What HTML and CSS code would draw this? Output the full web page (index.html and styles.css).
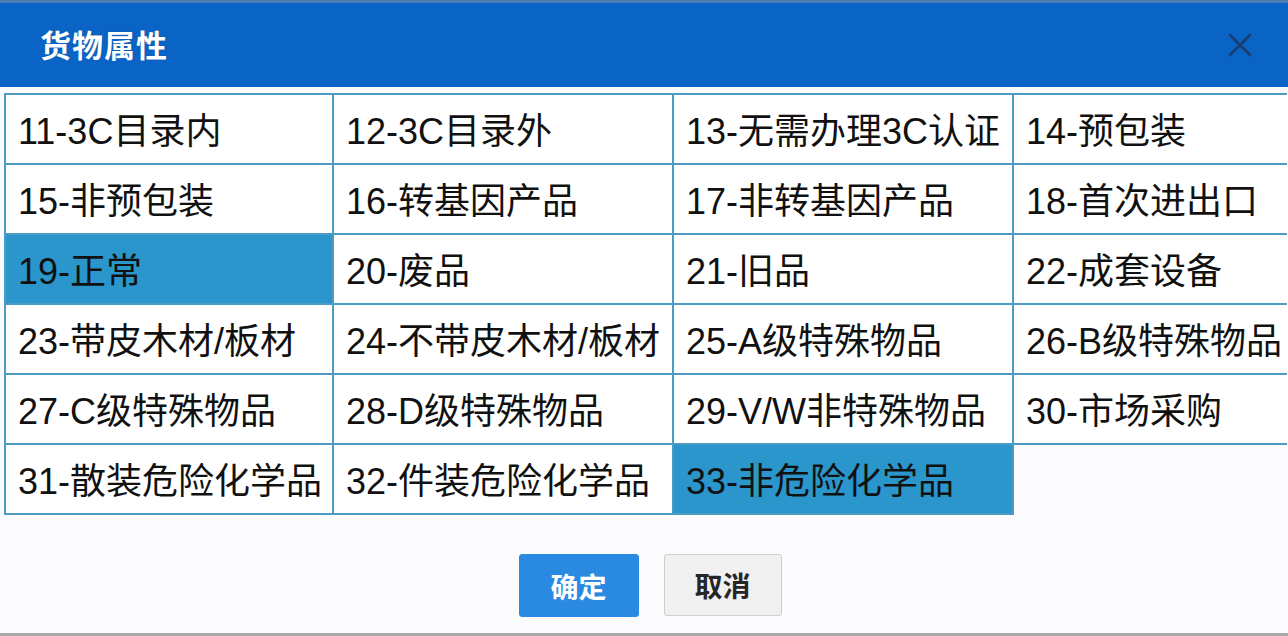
FILE: index.html
```html
<!DOCTYPE html>
<html lang="zh-CN">
<head>
<meta charset="utf-8">
<title>货物属性</title>
<link rel="stylesheet" href="styles.css">
</head>
<body>
<div class="dialog">
  <div class="topstrip"></div>
  <header class="head">
    <h1 class="title">货物属性</h1>
    <button class="close" aria-label="关闭">
      <svg width="24" height="24" viewBox="0 0 24 24"><path d="M2 2 L22 22 M22 2 L2 22" stroke="#1c3c6e" stroke-width="2.6" fill="none" stroke-linecap="round"/></svg>
    </button>
  </header>
  <div class="grid">
    <div class="cell">11-3C目录内</div>
    <div class="cell">12-3C目录外</div>
    <div class="cell">13-无需办理3C认证</div>
    <div class="cell">14-预包装</div>
    <div class="cell">15-非预包装</div>
    <div class="cell">16-转基因产品</div>
    <div class="cell">17-非转基因产品</div>
    <div class="cell">18-首次进出口</div>
    <div class="cell sel">19-正常</div>
    <div class="cell">20-废品</div>
    <div class="cell">21-旧品</div>
    <div class="cell">22-成套设备</div>
    <div class="cell">23-带皮木材/板材</div>
    <div class="cell">24-不带皮木材/板材</div>
    <div class="cell">25-A级特殊物品</div>
    <div class="cell">26-B级特殊物品</div>
    <div class="cell">27-C级特殊物品</div>
    <div class="cell">28-D级特殊物品</div>
    <div class="cell">29-V/W非特殊物品</div>
    <div class="cell">30-市场采购</div>
    <div class="cell">31-散装危险化学品</div>
    <div class="cell">32-件装危险化学品</div>
    <div class="cell sel">33-非危险化学品</div>
  </div>
  <div class="actions">
    <button class="btn primary">确定</button>
    <button class="btn">取消</button>
  </div>
  <div class="bottomline"></div>
</div>
</body>
</html>
```

FILE: styles.css
```css
html, body {
  margin: 0;
  padding: 0;
}
body {
  width: 1288px;
  height: 636px;
  overflow: hidden;
  background: #fcfcfe;
  font-family: "Liberation Sans", "Noto Sans CJK SC", sans-serif;
  color: #111;
}
.dialog {
  display: flex;
  flex-direction: column;
  height: 636px;
}
.topstrip {
  height: 3px;
  background: #4f7db6;
}
.head {
  height: 84px;
  background: #0a64c6;
  display: flex;
  align-items: center;
  justify-content: space-between;
  padding: 0 36px 0 40px;
  box-sizing: border-box;
}
.title {
  margin: 0 0 4px 0;
  font-size: 31px;
  font-weight: 700;
  color: #fff;
  font-family: "Noto Sans CJK SC", sans-serif;
  text-shadow: 0 0 1px rgba(0,0,0,0.3);
  letter-spacing: 1px;
}
.close {
  background: none;
  border: 0;
  padding: 0;
  width: 24px;
  height: 24px;
}
.close svg { display: block; }
.grid {
  margin: 6px 0 0 4px;
  display: grid;
  grid-template-columns: 328px 340px 340px 273px;
  grid-auto-rows: 70px;
  border-top: 2px solid #4b9bc3;
  border-left: 2px solid #4b9bc3;
  width: max-content;
}
.cell {
  border-right: 2px solid #4b9bc3;
  border-bottom: 2px solid #4b9bc3;
  display: flex;
  align-items: center;
  padding: 0 0 2px 12px;
  font-size: 36px;
  white-space: nowrap;
  overflow: hidden;
  background: #fff;
}
.cell:nth-child(4n) {
  border-right: 0;
}
.cell.sel {
  background: #2a96cc;
}
.actions {
  display: flex;
  justify-content: center;
  gap: 25px;
  margin-top: 39px;
  padding-left: 12px;
}
.btn {
  width: 118px;
  height: 62px;
  border: 1px solid #cfcfcf;
  border-radius: 3px;
  background: #f0f0f0;
  color: #262626;
  font-family: "Noto Sans CJK SC", sans-serif;
  font-size: 28px;
  font-weight: 700;
  padding: 0;
}
.btn.primary {
  width: 120px;
  height: 63px;
  background: #2a8ae2;
  border-color: #2a8ae2;
  color: #fff;
}
.bottomline {
  margin-top: auto;
  height: 3px;
  background: #a8a8aa;
}
```
